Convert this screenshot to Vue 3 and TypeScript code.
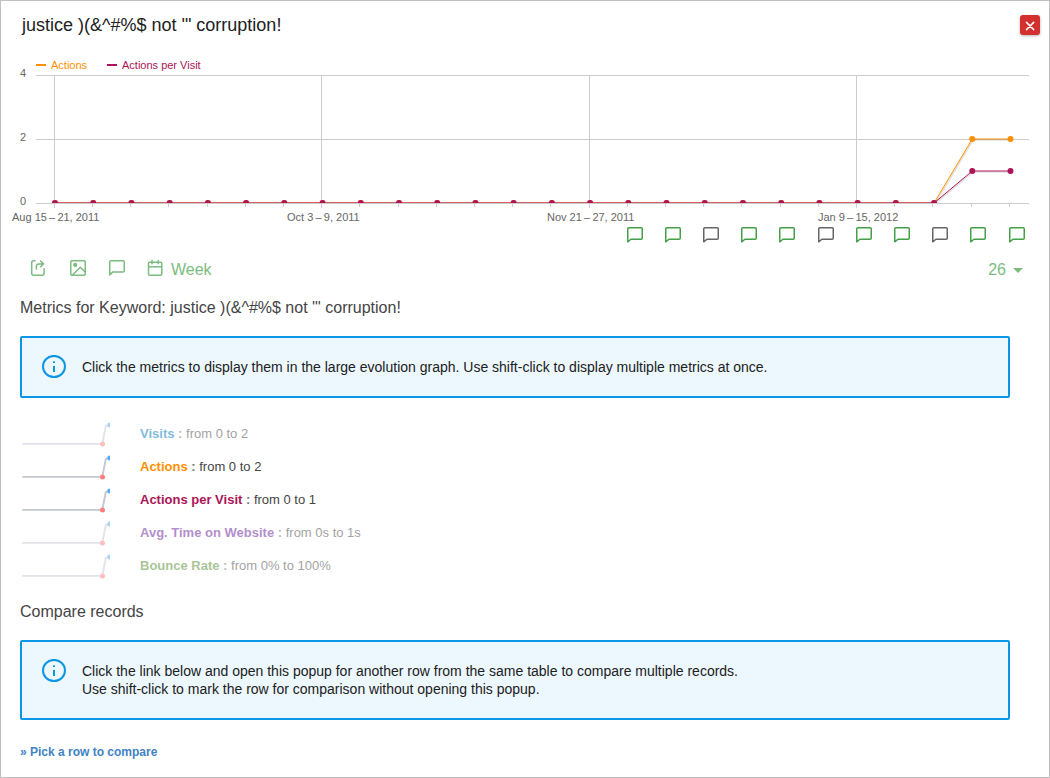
<script setup lang="ts">
interface Metric {
  name: string
  range: string
  color: string
  active: boolean
}

const weeks = Array.from({ length: 26 }, (_, i) => i)
const pointX = (i: number): number => 55 + i * 38.22
const tickX = (i: number): number => Math.floor(54.3 + i * 38.2) + 0.5
const yFor = (v: number): number => 203 - v * 32

const series = [
  { name: 'Actions', color: '#ff8f00', values: weeks.map((i) => (i > 23 ? 2 : 0)) },
  { name: 'Actions per Visit', color: '#ad1457', values: weeks.map((i) => (i > 23 ? 1 : 0)) },
]
const tail = (values: number[]): string =>
  [23, 24, 25].map((i) => `${pointX(i)},${yFor(values[i])}`).join(' ')

const yLabels = [
  { text: '4', y: 77 },
  { text: '2', y: 141 },
  { text: '0', y: 205 },
]
const xLabels = [
  { text: 'Aug 15\u2009–\u200921, 2011', x: 12 },
  { text: 'Oct 3\u2009–\u20099, 2011', x: 287 },
  { text: 'Nov 21\u2009–\u200927, 2011', x: 547 },
  { text: 'Jan 9\u2009–\u200915, 2012', x: 818 },
]
const notes = [627, 665, 703, 741, 779, 818, 856, 894, 932, 970, 1009].map((x, i) => ({
  x,
  color: [2, 5, 8].includes(i) ? '#666' : '#43a047',
}))

const metrics: Metric[] = [
  { name: 'Visits', range: 'from 0 to 2', color: '#0277bd', active: false },
  { name: 'Actions', range: 'from 0 to 2', color: '#ff8f00', active: true },
  { name: 'Actions per Visit', range: 'from 0 to 1', color: '#ad1457', active: true },
  { name: 'Avg. Time on Website', range: 'from 0s to 1s', color: '#6a1b9a', active: false },
  { name: 'Bounce Rate', range: 'from 0% to 100%', color: '#558b2f', active: false },
]
</script>

<template>
  <div class="dialog">
    <header class="head">
      <h1>justice )(&amp;^#%$ not '" corruption!</h1>
      <button class="close" aria-label="Close">
        <svg width="20" height="20" viewBox="0 0 20 20"><path d="M6.5 7.4l7.2 7.2M13.7 7.4l-7.2 7.2" stroke="#fff" stroke-width="1.5" stroke-linecap="round" /></svg>
      </button>
    </header>

    <svg class="chart" width="1048" height="196" viewBox="1 52 1048 196">
      <defs>
        <clipPath id="plot"><rect x="36" y="70" width="994" height="133" /></clipPath>
      </defs>
      <path d="M36 65h10" stroke="#ff8f00" stroke-width="2" />
      <text x="51" y="69" fill="#ff8f00">Actions</text>
      <path d="M107 65h10" stroke="#ad1457" stroke-width="2" />
      <text x="122" y="69" fill="#ad1457">Actions per Visit</text>

      <path d="M36 75.5h993M36 139.5h993M36 203.5h993" stroke="#ccc" />
      <path d="M54.5 75v133M321.5 75v133M589.5 75v133M856.5 75v133" stroke="#ccc" />
      <path v-for="i in weeks" :key="`t${i}`" :d="`M${tickX(i)} 204v3`" stroke="#ccc" />
      <text v-for="l in yLabels" :key="l.text" x="20" :y="l.y" fill="#666">{{ l.text }}</text>
      <text v-for="l in xLabels" :key="l.text" :x="l.x" y="221" fill="#666">{{ l.text }}</text>

      <g clip-path="url(#plot)">
        <path :d="`M55 202.5H${pointX(23)}`" stroke="#dc5960" />
        <g v-for="s in series" :key="s.name">
          <polyline :points="tail(s.values)" fill="none" stroke="#000" stroke-opacity=".12" stroke-width="1.5" transform="translate(.8 1)" />
          <polyline :points="tail(s.values)" fill="none" :stroke="s.color" stroke-width="1" />
          <circle v-for="i in weeks" :key="i" :cx="pointX(i)" :cy="yFor(s.values[i])" r="3" :fill="s.color" />
        </g>
      </g>

      <path
        v-for="n in notes"
        :key="n.x"
        :transform="`translate(${n.x} 227)`"
        d="M.75 14.8V1.8Q.75.75 1.8.75H14.2Q15.25.75 15.25 1.8V11.2Q15.25 12.25 14.2 12.25H3.9Z"
        fill="none"
        :stroke="n.color"
        stroke-width="1.5"
        stroke-linejoin="round"
      />
    </svg>

    <div class="toolbar">
      <svg width="18" height="18" viewBox="0 0 18 18">
        <path d="M5 1.8H3.7Q1.7 1.8 1.7 3.8V14.2Q1.7 16.2 3.7 16.2H12.1Q14.1 16.2 14.1 14.2V9.8M6.4 10V7.4Q6.4 4.9 8.9 4.9H13M10.6 2L13.5 4.9 10.6 7.8" />
      </svg>
      <svg width="18" height="18" viewBox="0 0 18 18">
        <rect x="1.75" y="1.75" width="14.5" height="14.5" rx="1.2" />
        <path d="M3.5 16L11.3 8.2 16 12.8" />
        <circle class="solid" cx="6.2" cy="5.9" r="1.3" />
      </svg>
      <svg width="18" height="18" viewBox="0 0 18 18">
        <path d="M1.75 15.9V2.8Q1.75 1.75 2.8 1.75H15.2Q16.25 1.75 16.25 2.8V11.8Q16.25 12.9 15.2 12.9H4.8Z" />
      </svg>
      <div class="period">
        <svg width="18" height="18" viewBox="0 0 18 18">
          <path d="M2.7 3.2H13.7Q14.8 3.2 14.8 4.3V15Q14.8 16.2 13.7 16.2H2.7Q1.5 16.2 1.5 15V4.3Q1.5 3.2 2.7 3.2ZM1.5 7.7H14.8M5 1.5V4.8M11.3 1.5V4.8" />
        </svg>
        <span>Week</span>
      </div>
      <div class="limit">
        <span>26</span>
        <i class="caret"></i>
      </div>
    </div>

    <main>
      <h2>Metrics for Keyword: justice )(&amp;^#%$ not '" corruption!</h2>
      <div class="notice">
        <svg width="24" height="24" viewBox="0 0 24 24">
          <ellipse cx="12" cy="11.5" rx="11" ry="10.6" fill="none" stroke="#0d96e6" stroke-width="2" />
          <path d="M12 11v6M12 6.3v1.8" stroke="#0d96e6" stroke-width="2" />
        </svg>
        <p>Click the metrics to display them in the large evolution graph. Use shift-click to display multiple metrics at once.</p>
      </div>

      <ul class="metrics">
        <li v-for="m in metrics" :key="m.name" :class="{ dim: !m.active }">
          <svg width="90" height="33" viewBox="0 0 90 33">
            <path d="M2.3 26.9H82.3L85.8 9 90 7.6" fill="none" stroke="#162c4a" stroke-opacity=".26" stroke-width="1.9" />
            <circle cx="82.5" cy="27" r="2.5" fill="#ff7f7f" />
            <circle cx="89.8" cy="8" r="2.5" fill="#55aaff" />
          </svg>
          <span class="text"><b :style="{ color: m.color }">{{ m.name }}</b><b class="colon">&nbsp;:</b> {{ m.range }}</span>
        </li>
      </ul>

      <h2>Compare records</h2>
      <div class="notice">
        <svg width="24" height="24" viewBox="0 0 24 24">
          <ellipse cx="12" cy="11.5" rx="11" ry="10.6" fill="none" stroke="#0d96e6" stroke-width="2" />
          <path d="M12 11v6M12 6.3v1.8" stroke="#0d96e6" stroke-width="2" />
        </svg>
        <p>Click the link below and open this popup for another row from the same table to compare multiple records.<br />Use shift-click to mark the row for comparison without opening this popup.</p>
      </div>
      <a class="pick">» Pick a row to compare</a>
    </main>
  </div>
</template>

<style>
body {
  background: #fff;
}
</style>

<style scoped>
.dialog {
  box-sizing: border-box;
  width: 1050px;
  height: 778px;
  border: 1px solid #c0c0c0;
  overflow: hidden;
  font-family: "Liberation Sans", Arial, sans-serif;
  color: #212121;
}
.head {
  display: flex;
  justify-content: space-between;
  align-items: center;
  height: 48px;
  margin-bottom: 3px;
  padding: 0 9px 0 21px;
}
h1 {
  margin: 0;
  font-size: 18px;
  line-height: 22px;
  font-weight: 400;
}
.close {
  width: 20px;
  height: 20px;
  padding: 0;
  border: 0;
  border-radius: 3px;
  background: #d32f2f;
  box-shadow: 0 1px 3px rgba(0, 0, 0, 0.3);
}
.close svg,
.chart {
  display: block;
}
.chart text {
  font-size: 11px;
}
.toolbar {
  display: flex;
  align-items: center;
  height: 40px;
  padding: 0 26px 0 29px;
  gap: 21px;
  color: #7cbc80;
  font-size: 16px;
}
.toolbar svg {
  fill: none;
  stroke: #7cbc80;
  stroke-width: 1.5;
  stroke-linejoin: round;
  stroke-linecap: round;
}
.toolbar .solid {
  fill: #7cbc80;
}
.toolbar span {
  padding-top: 3px;
}
.period {
  display: flex;
  align-items: center;
  gap: 6px;
}
.limit {
  display: flex;
  align-items: center;
  gap: 7px;
  margin-left: auto;
}
.caret {
  margin-top: 5px;
  border: 5px solid transparent;
  border-top-color: #7cbc80;
  border-bottom: 0;
}
main {
  padding: 0 39px 0 19px;
}
h2 {
  margin: 0;
  padding-top: 10px;
  font-size: 16px;
  line-height: 20px;
  font-weight: 400;
  color: #444;
}
.notice {
  display: flex;
  align-items: flex-start;
  gap: 16px;
  margin-top: 18px;
  padding: 17px 20px;
  border: 2px solid #0d96e6;
  border-radius: 2px;
  background: #ecf7fe;
}
.notice p {
  margin: 3px 0;
  font-size: 14px;
  line-height: 18px;
}
.metrics {
  margin: 19px 0 10px;
  padding: 0;
  list-style: none;
}
.metrics li {
  display: flex;
  align-items: center;
  height: 33px;
  gap: 30px;
}
.metrics .text {
  font-size: 13px;
  line-height: 16px;
  color: #444;
}
.colon {
  color: #777;
}
.dim {
  opacity: 0.5;
}
.pick {
  display: block;
  margin-top: 25px;
  font-size: 12px;
  line-height: 14px;
  font-weight: 700;
  color: #4183c4;
}
</style>
